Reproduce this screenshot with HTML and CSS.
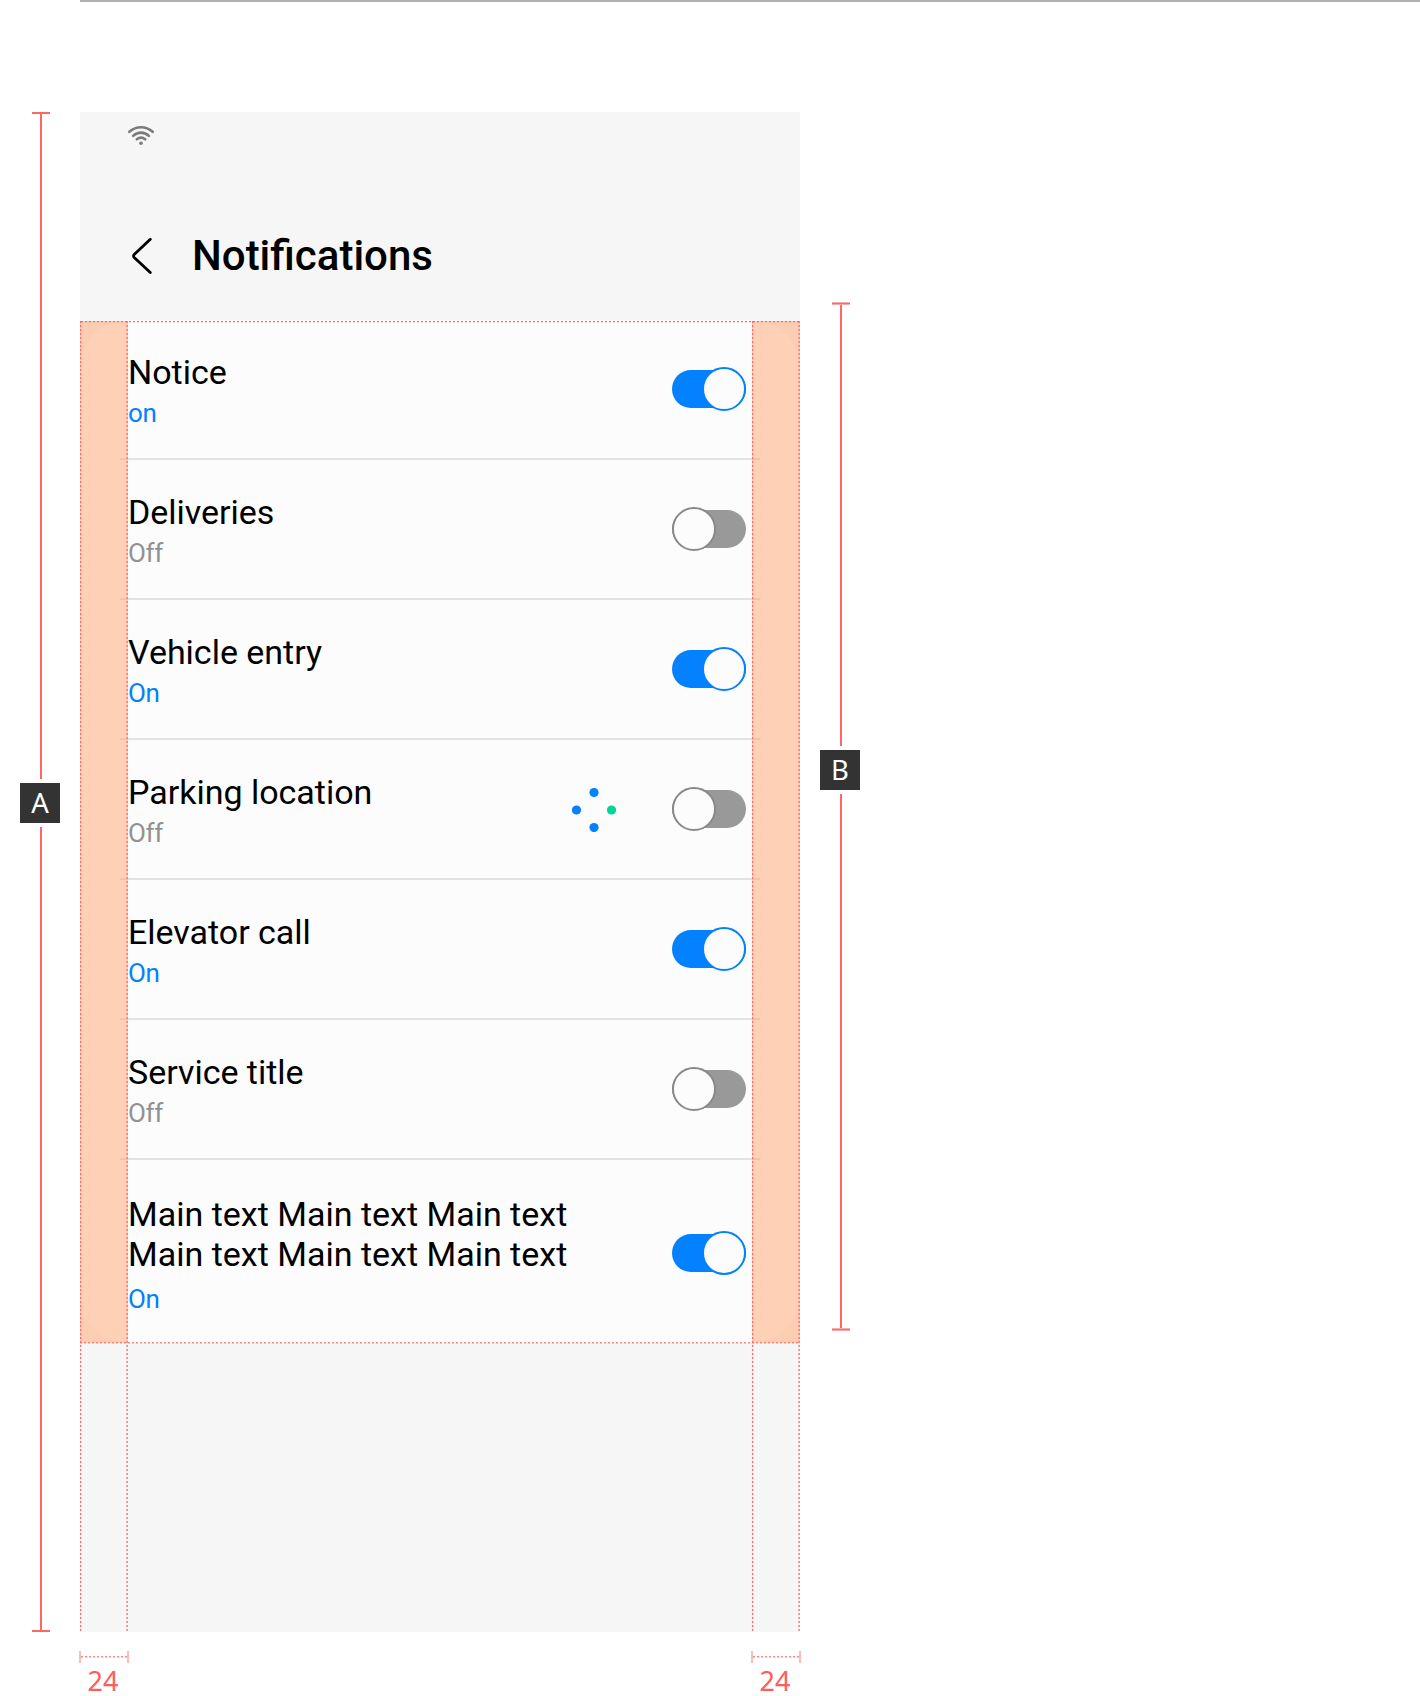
FILE: index.html
```html
<!DOCTYPE html>
<html lang="en">
<head>
<meta charset="utf-8">
<title>Notifications</title>
<link rel="stylesheet" href="styles.css">
</head>
<body>
<hr class="rule">
<main class="spec">
  <div class="measure measure-a"><i class="cap"></i><i class="line line-top"></i><b class="tag">A</b><i class="line"></i><i class="cap"></i></div>
  <div class="device">
    <section class="screen">
      <header>
        <svg class="wifi" width="28" height="20" viewBox="0 0 28 20" fill="none" stroke="#7b7b7b" stroke-width="2.6" stroke-linecap="round"><path d="M2.3 6.8Q7.5 2.2 14 2.2T25.7 6.8M6.1 10.9Q9.6 7.6 14 7.6T21.9 10.9M9.8 14.3Q14 11 18.2 14.3"/><circle cx="14" cy="18.2" r="1.8" fill="#7b7b7b" stroke="none"/></svg>
        <div class="title"><svg width="22" height="38" viewBox="0 0 22 38" fill="none" stroke="#000" stroke-width="2.8" stroke-linecap="round" stroke-linejoin="round"><path d="M18.3 2.2L2.2 17.6Q.8 19 2.2 20.4L18.3 35.6"/></svg><h1>Notifications</h1></div>
      </header>
      <div class="card">
        <div class="row"><div class="text"><div class="name">Notice</div><div class="state on">on</div></div><span class="toggle on"></span></div>
        <div class="row"><div class="text"><div class="name">Deliveries</div><div class="state">Off</div></div><span class="toggle"></span></div>
        <div class="row"><div class="text"><div class="name">Vehicle entry</div><div class="state on">On</div></div><span class="toggle on"></span></div>
        <div class="row"><div class="text"><div class="name">Parking location</div><div class="state">Off</div></div><svg class="spinner" width="44" height="44" viewBox="0 0 44 44" fill="#0381fe"><circle cx="22" cy="4.5" r="4.6"/><circle cx="4.5" cy="22" r="4.6"/><circle cx="22" cy="39.5" r="4.6"/><circle cx="39.5" cy="22" r="4.6" fill="#00d695"/></svg><span class="toggle"></span></div>
        <div class="row"><div class="text"><div class="name">Elevator call</div><div class="state on">On</div></div><span class="toggle on"></span></div>
        <div class="row"><div class="text"><div class="name">Service title</div><div class="state">Off</div></div><span class="toggle"></span></div>
        <div class="row tall"><div class="text"><div class="name">Main text Main text Main text<br>Main text Main text Main text</div><div class="state on">On</div></div><span class="toggle on"></span></div>
      </div>
      <div class="margin left"></div>
      <div class="margin right"></div>
      <svg class="guides" width="720" height="1520" fill="none" stroke="#ff6666" stroke-dasharray="2 2">
        <path d="M1 209.5H720"/><path d="M1 210.5H720" stroke-opacity=".25"/>
        <path d="M0 1230.75H720" stroke-width="1.5" stroke-opacity=".75"/>
        <path d="M.6 209V1520M47.1 209V1520M672.6 209V1520M719.1 209V1520" stroke-width="1.3"/>
      </svg>
    </section>
    <footer>
      <div class="gutter"><svg width="50" height="12" fill="none" stroke="#ff6666"><path d="M1 0V12M49 0V12" stroke-width="2" stroke-opacity=".45"/><path d="M2 5.75H48" stroke-width="1.5" stroke-dasharray="2 2" stroke-opacity=".8"/></svg><span>24</span></div>
      <div class="gutter"><svg width="50" height="12" fill="none" stroke="#ff6666"><path d="M1 0V12M49 0V12" stroke-width="2" stroke-opacity=".45"/><path d="M2 5.75H48" stroke-width="1.5" stroke-dasharray="2 2" stroke-opacity=".8"/></svg><span>24</span></div>
    </footer>
  </div>
  <div class="measure measure-b"><i class="cap"></i><i class="line line-top"></i><b class="tag">B</b><i class="line"></i><i class="cap"></i></div>
</main>
</body>
</html>
```
FILE: styles.css
```css
* { box-sizing: border-box; }
body { margin: 0; min-height: 1696px; background: #fff; color: #000; font-family: Roboto, sans-serif; }
.rule { height: 2px; margin: 0 0 110px 80px; border: 0; background: #b0b0b0; }
.spec { display: flex; align-items: flex-start; }

.measure { display: flex; flex-direction: column; align-items: center; }
.measure-a { width: 40px; height: 1520px; margin: 0 19px 0 21px; }
.measure-b { width: 40px; height: 1029px; margin: 190px 0 0 21px; }
.cap { width: 18px; height: 2px; background: #ff6666; flex: none; }
.measure-b .cap { height: 3px; background: linear-gradient(#ffaaaa 1px, #ff6666 1px 2px, #ffaaaa 2px); }
.line { width: 2px; flex: 1; background: #ff6666; }
.measure-a .line-top { flex: 0 0 665px; }
.measure-b .line-top { flex: 0 0 441px; }
.tag { align-self: flex-start; width: 40px; height: 40px; margin: 4px 0 4px -1px; flex: none; background: #333; color: #fff; font: 400 27.5px/40px "Noto Sans", sans-serif; text-align: center; }

.screen { position: relative; width: 720px; height: 1520px; background: #f6f6f6; }
header { height: 208px; padding: 13px 48px 0 47px; }
.wifi { display: block; }
.title { display: flex; align-items: center; height: 50px; margin-top: 86px; padding-left: 5px; gap: 38px; }
h1 { margin: 0; font-size: 42px; line-height: 50px; font-weight: 500; }

.card { height: 1023px; padding: 0 40px; border-radius: 48px; background: #fcfcfc; }
.row { display: flex; height: 140px; padding: 32px 14px 0 8px; border-bottom: 2px solid #e3e3e3; }
.text { flex: 1; }
.name { font-size: 34px; line-height: 41px; letter-spacing: -.02px; }
.state { margin-top: 3px; font-size: 26px; line-height: 35px; letter-spacing: -.3px; color: #919191; }
.state.on { color: #0381fe; }
.tall { height: 183px; padding-top: 34px; border: 0; }
.tall .name { line-height: 40px; letter-spacing: 0; }
.tall .state { margin-top: 8px; }

.toggle { position: relative; flex: none; width: 74px; height: 44px; margin-top: 15px; }
.toggle::after { content: ""; position: absolute; left: 0; top: 3.4px; width: 74px; height: 37.2px; border-radius: 19px; background: #999; }
.toggle::before { content: ""; box-sizing: border-box; position: absolute; z-index: 1; left: 0; top: 0; width: 44px; height: 44px; border: 2px solid #898989; border-radius: 50%; background: #fcfcfc; }
.tall .toggle { margin-top: 37px; }
.toggle.on::after { background: #0381fe; }
.toggle.on::before { left: 30px; border-color: #0381fe; }
.spinner { margin: 16px 56px 0 0; }

.margin { position: absolute; top: 209px; width: 48px; height: 1022px; background: rgba(255, 166, 112, .5); }
.margin.left { left: 0; }
.margin.right { right: 0; }
.guides { position: absolute; left: 0; top: 0; }

footer { display: flex; justify-content: space-between; margin: 19px -1px 0; }
.gutter { width: 50px; color: #ff5c5c; font: 400 27px/32px "Noto Sans", sans-serif; }
.gutter svg { display: block; }
.gutter span { display: block; height: 33px; padding: 3px 0 0 8.5px; line-height: 30px; }
```
